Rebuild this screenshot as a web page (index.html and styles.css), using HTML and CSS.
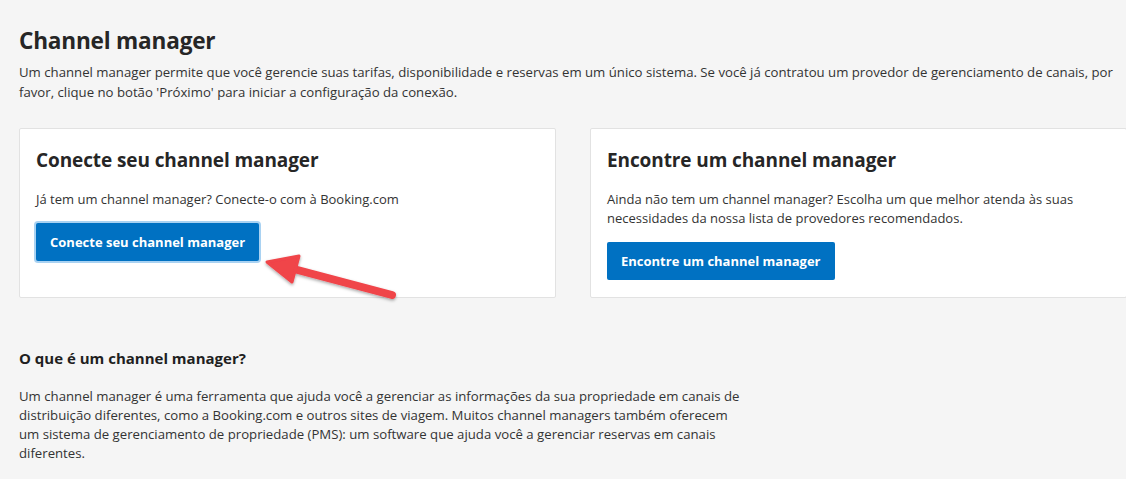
FILE: index.html
```html
<!DOCTYPE html>
<html lang="pt-BR">
<head>
<meta charset="utf-8">
<title>Channel manager</title>
<link rel="stylesheet" href="styles.css">
</head>
<body>
<main class="page">
  <h1 class="title">Channel manager</h1>
  <p class="intro">Um channel manager permite que você gerencie suas tarifas, disponibilidade e reservas em um único sistema. Se você já contratou um provedor de gerenciamento de canais, por favor, clique no botão 'Próximo' para iniciar a configuração da conexão.</p>

  <div class="cards">
    <section class="card">
      <h2 class="card-title">Conecte seu channel manager</h2>
      <p class="card-text">Já tem um channel manager? Conecte-o com à Booking.com</p>
      <button class="btn btn-focus">Conecte seu channel manager</button>
    </section>
    <section class="card">
      <h2 class="card-title">Encontre um channel manager</h2>
      <p class="card-text">Ainda não tem um channel manager? Escolha um que melhor atenda às suas necessidades da nossa lista de provedores recomendados.</p>
      <button class="btn">Encontre um channel manager</button>
    </section>
  </div>

  <section class="info">
    <h3 class="info-title">O que é um channel manager?</h3>
    <p class="info-text">Um channel manager é uma ferramenta que ajuda você a gerenciar as informações da sua propriedade em canais de distribuição diferentes, como a Booking.com e outros sites de viagem. Muitos channel managers também oferecem um sistema de gerenciamento de propriedade (PMS): um software que ajuda você a gerenciar reservas em canais diferentes.</p>
  </section>

  <svg class="arrow" width="140" height="50" viewBox="0 0 140 50" aria-hidden="true">
    <defs>
      <filter id="sh" x="-20%" y="-40%" width="140%" height="180%">
        <feDropShadow dx="0" dy="1.5" stdDeviation="1.5" flood-color="#000" flood-opacity="0.35"/>
      </filter>
    </defs>
    <g filter="url(#sh)" fill="#f0444a" stroke="#f0444a" stroke-linejoin="round" stroke-linecap="round">
      <line x1="30" y1="18" x2="132" y2="45" stroke-width="8"/>
      <polygon points="7,12 39,6 32,32" stroke-width="3"/>
    </g>
  </svg>
</main>
</body>
</html>
```

FILE: styles.css
```css
html, body {
  margin: 0;
  padding: 0;
}

body {
  background: #f5f5f5;
  font-family: "Open Sans", "Noto Sans", "Liberation Sans", sans-serif;
  color: #333333;
  width: 1126px;
  height: 479px;
  overflow: hidden;
}

.page {
  position: relative;
  padding: 26px 0 0 19px;
}

.title {
  margin: 0 0 6px;
  font-size: 22.6px;
  line-height: 30px;
  font-weight: 700;
  color: #262626;
  letter-spacing: -0.2px;
}

.intro {
  margin: 0;
  font-size: 13.2px;
  line-height: 20px;
  width: 1104px;
  color: #333333;
}

.cards {
  display: grid;
  grid-template-columns: 537px 537px;
  gap: 34px;
  margin-top: 26px;
}

.card {
  background: #ffffff;
  border: 1px solid #e2e2e2;
  border-radius: 2px;
  padding: 18px 16px 17px;
}

.card-title {
  margin: 0 0 17px;
  font-size: 19px;
  line-height: 26px;
  font-weight: 700;
  color: #262626;
  letter-spacing: -0.1px;
}

.card-text {
  margin: 0 0 14px;
  font-size: 13px;
  line-height: 19px;
  color: #333333;
}

.btn {
  display: block;
  background: #0071c2;
  color: #ffffff;
  border: 0;
  border-radius: 2px;
  height: 38px;
  padding: 0 14px;
  font-family: inherit;
  font-size: 13px;
  font-weight: 700;
}

.btn-focus {
  box-shadow: 0 0 0 2px #a9d2f2;
}

.info {
  margin-top: 49px;
  width: 730px;
}

.info-title {
  margin: 0 0 18px;
  font-size: 15px;
  line-height: 22px;
  font-weight: 700;
  color: #1f1f1f;
}

.info-text {
  margin: 0;
  font-size: 13.2px;
  line-height: 19px;
  color: #333333;
}

.arrow {
  position: absolute;
  left: 260px;
  top: 250px;
  overflow: visible;
}
```
